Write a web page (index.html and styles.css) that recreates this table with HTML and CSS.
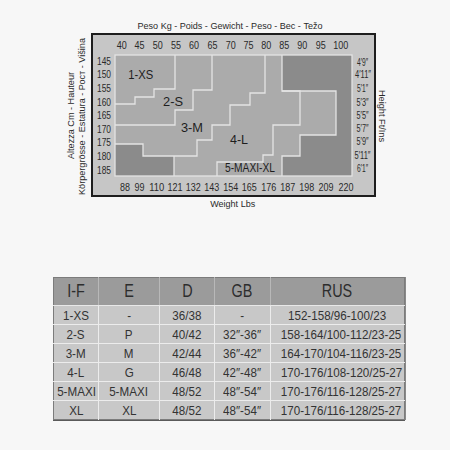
FILE: index.html
```html
<!DOCTYPE html>
<html>
<head>
<meta charset="utf-8">
<link rel="stylesheet" href="styles.css">
</head>
<body>
<div class="chart">
<svg width="450" height="215" viewBox="0 0 450 215" xmlns="http://www.w3.org/2000/svg">
  <text class="cap" x="230" y="28.5" text-anchor="middle" textLength="185" lengthAdjust="spacingAndGlyphs">Peso Kg - Poids - Gewicht - Peso - Вес - Težo</text>
  <rect x="92" y="34" width="283" height="162" fill="#c6c6c6" stroke="#1e1e1e" stroke-width="2"/>
  <rect x="115" y="55" width="237" height="121" fill="#ababab"/>
  <polygon points="282,55 352,55 352,176 282,176 282,156 300,156 300,135 336,135 336,91 282,91" fill="#8b8b8b"/>
  <polygon points="115,144 143,144 143,156 174,156 174,176 115,176" fill="#8b8b8b"/>
  <g fill="none" stroke="#e4e4e4" stroke-width="1.3">
    <rect x="115" y="55" width="237" height="121"/>
    <polyline points="175,55 175,89 154,89 154,97 135,97 135,104 115,104"/>
    <polyline points="212,55 212,90 193,90 193,110 175,110 175,125 115,125"/>
    <polyline points="265,55 265,93 250,93 250,105 230,105 230,125 212,125 212,140 197,140 197,156 143,156 143,144 115,144"/>
    <polyline points="174,156 174,176"/>
    <polyline points="282,55 282,91 300,91 300,125 273,125 273,155 263,155 263,162 217,162 217,176"/>
    <polyline points="282,91 336,91 336,135 300,135 300,156 282,156 282,176"/>
  </g>
  <g class="num" text-anchor="middle">
    <text x="121.7" y="48.5" textLength="10" lengthAdjust="spacingAndGlyphs">40</text>
    <text x="139.6" y="48.5" textLength="10" lengthAdjust="spacingAndGlyphs">45</text>
    <text x="157.7" y="48.5" textLength="10" lengthAdjust="spacingAndGlyphs">50</text>
    <text x="176" y="48.5" textLength="10" lengthAdjust="spacingAndGlyphs">55</text>
    <text x="194" y="48.5" textLength="10" lengthAdjust="spacingAndGlyphs">60</text>
    <text x="212.5" y="48.5" textLength="10" lengthAdjust="spacingAndGlyphs">65</text>
    <text x="230.7" y="48.5" textLength="10" lengthAdjust="spacingAndGlyphs">70</text>
    <text x="248.5" y="48.5" textLength="10" lengthAdjust="spacingAndGlyphs">75</text>
    <text x="266.3" y="48.5" textLength="10" lengthAdjust="spacingAndGlyphs">80</text>
    <text x="284.3" y="48.5" textLength="10" lengthAdjust="spacingAndGlyphs">85</text>
    <text x="302.3" y="48.5" textLength="10" lengthAdjust="spacingAndGlyphs">90</text>
    <text x="320.7" y="48.5" textLength="10" lengthAdjust="spacingAndGlyphs">95</text>
    <text x="340.7" y="48.5" textLength="15" lengthAdjust="spacingAndGlyphs">100</text>

    <text x="104" y="64.7" textLength="14" lengthAdjust="spacingAndGlyphs">145</text>
    <text x="104" y="78.3" textLength="14" lengthAdjust="spacingAndGlyphs">150</text>
    <text x="104" y="91.9" textLength="14" lengthAdjust="spacingAndGlyphs">155</text>
    <text x="104" y="105.5" textLength="14" lengthAdjust="spacingAndGlyphs">160</text>
    <text x="104" y="119.1" textLength="14" lengthAdjust="spacingAndGlyphs">165</text>
    <text x="104" y="132.7" textLength="14" lengthAdjust="spacingAndGlyphs">170</text>
    <text x="104" y="146.3" textLength="14" lengthAdjust="spacingAndGlyphs">175</text>
    <text x="104" y="159.9" textLength="14" lengthAdjust="spacingAndGlyphs">180</text>
    <text x="104" y="173.5" textLength="14" lengthAdjust="spacingAndGlyphs">185</text>

    <text x="362.5" y="66" textLength="11" lengthAdjust="spacingAndGlyphs">4′9″</text>
    <text x="363" y="78.3" textLength="16" lengthAdjust="spacingAndGlyphs">4′11″</text>
    <text x="362.5" y="91.7" textLength="11" lengthAdjust="spacingAndGlyphs">5′1″</text>
    <text x="362.5" y="105.7" textLength="12" lengthAdjust="spacingAndGlyphs">5′3″</text>
    <text x="362.5" y="119" textLength="12" lengthAdjust="spacingAndGlyphs">5′5″</text>
    <text x="362.5" y="132.3" textLength="12" lengthAdjust="spacingAndGlyphs">5′7″</text>
    <text x="362.5" y="144.5" textLength="12" lengthAdjust="spacingAndGlyphs">5′9″</text>
    <text x="362.5" y="159" textLength="16" lengthAdjust="spacingAndGlyphs">5′11″</text>
    <text x="362.5" y="172" textLength="11" lengthAdjust="spacingAndGlyphs">6′1″</text>

    <text x="125" y="190.7" textLength="10" lengthAdjust="spacingAndGlyphs">88</text>
    <text x="139.5" y="190.7" textLength="10" lengthAdjust="spacingAndGlyphs">99</text>
    <text x="156.7" y="190.7" textLength="15" lengthAdjust="spacingAndGlyphs">110</text>
    <text x="175" y="190.7" textLength="15" lengthAdjust="spacingAndGlyphs">121</text>
    <text x="193.3" y="190.7" textLength="15" lengthAdjust="spacingAndGlyphs">132</text>
    <text x="211.7" y="190.7" textLength="15" lengthAdjust="spacingAndGlyphs">143</text>
    <text x="230.7" y="190.7" textLength="15" lengthAdjust="spacingAndGlyphs">154</text>
    <text x="249.3" y="190.7" textLength="15" lengthAdjust="spacingAndGlyphs">165</text>
    <text x="268.7" y="190.7" textLength="15" lengthAdjust="spacingAndGlyphs">176</text>
    <text x="287.7" y="190.7" textLength="15" lengthAdjust="spacingAndGlyphs">187</text>
    <text x="306.7" y="190.7" textLength="15" lengthAdjust="spacingAndGlyphs">198</text>
    <text x="326" y="190.7" textLength="15" lengthAdjust="spacingAndGlyphs">209</text>
    <text x="346" y="190.7" textLength="15" lengthAdjust="spacingAndGlyphs">220</text>
  </g>
  <g class="size" text-anchor="middle">
    <text x="140.7" y="79.3" textLength="25" lengthAdjust="spacingAndGlyphs">1-XS</text>
    <text x="173" y="106" textLength="20" lengthAdjust="spacingAndGlyphs">2-S</text>
    <text x="192" y="131.6" textLength="22" lengthAdjust="spacingAndGlyphs">3-M</text>
    <text x="239" y="144.3" textLength="18" lengthAdjust="spacingAndGlyphs">4-L</text>
    <text x="250" y="172.3" textLength="50" lengthAdjust="spacingAndGlyphs">5-MAXI-XL</text>
  </g>
  <text class="cap" x="232.7" y="206.8" text-anchor="middle" textLength="45" lengthAdjust="spacingAndGlyphs">Weight Lbs</text>
  <text class="cap" transform="translate(74.2,115.5) rotate(-90)" text-anchor="middle" textLength="87" lengthAdjust="spacingAndGlyphs">Altezza Cm - Hauteur</text>
  <text class="cap" transform="translate(85.2,116.5) rotate(-90)" text-anchor="middle" textLength="157" lengthAdjust="spacingAndGlyphs">Körpergrösse - Estatura - Рост - Višina</text>
  <text class="cap" transform="translate(378.5,116) rotate(90)" text-anchor="middle" textLength="52" lengthAdjust="spacingAndGlyphs">Height Ft/Ins</text>
</svg>
</div>
<div class="tablewrap">
<table class="sizes">
  <colgroup><col class="c1"><col class="c2"><col class="c3"><col class="c4"><col class="c5"></colgroup>
  <thead>
    <tr><th><span class="t">I-F</span></th><th><span class="t">E</span></th><th><span class="t">D</span></th><th><span class="t">GB</span></th><th><span class="t">RUS</span></th></tr>
  </thead>
  <tbody>
    <tr><td><span class="t">1-XS</span></td><td><span class="t">-</span></td><td><span class="t">36/38</span></td><td><span class="t">-</span></td><td><span class="t">152-158/96-100/23</span></td></tr>
    <tr><td><span class="t">2-S</span></td><td><span class="t">P</span></td><td><span class="t">40/42</span></td><td><span class="t">32″-36″</span></td><td><span class="t">158-164/100-112/23-25</span></td></tr>
    <tr><td><span class="t">3-M</span></td><td><span class="t">M</span></td><td><span class="t">42/44</span></td><td><span class="t">36″-42″</span></td><td><span class="t">164-170/104-116/23-25</span></td></tr>
    <tr><td><span class="t">4-L</span></td><td><span class="t">G</span></td><td><span class="t">46/48</span></td><td><span class="t">42″-48″</span></td><td><span class="t">170-176/108-120/25-27</span></td></tr>
    <tr><td><span class="t">5-MAXI</span></td><td><span class="t">5-MAXI</span></td><td><span class="t">48/52</span></td><td><span class="t">48″-54″</span></td><td><span class="t">170-176/116-128/25-27</span></td></tr>
    <tr><td><span class="t">XL</span></td><td><span class="t">XL</span></td><td><span class="t">48/52</span></td><td><span class="t">48″-54″</span></td><td><span class="t">170-176/116-128/25-27</span></td></tr>
  </tbody>
</table>
</div>
</body>
</html>
```
FILE: styles.css
```css
html, body {
  margin: 0;
  padding: 0;
}
body {
  width: 450px;
  height: 450px;
  overflow: hidden;
  background: #f7f7f7;
  font-family: "Liberation Sans", Arial, sans-serif;
  color: #2f2f2f;
}
.chart svg {
  display: block;
}
.cap {
  font-family: "Liberation Sans", Arial, sans-serif;
  font-size: 9.5px;
  fill: #2a2a2a;
}
.num text {
  font-family: "Liberation Sans", Arial, sans-serif;
  font-size: 11.5px;
  fill: #2a2a2a;
}
.size text {
  font-family: "Liberation Sans", Arial, sans-serif;
  font-size: 12px;
  fill: #1e1e1e;
}
.tablewrap {
  padding: 62px 0 0 53px;
}
.sizes {
  border-collapse: collapse;
  table-layout: fixed;
  width: 351px;
  border: 1px solid #7c7c7c;
  box-shadow: 0 1px 0 #5a5a5a, 1px 0 0 #8a8a8a;
}
.c1 { width: 45px; }
.c2 { width: 61px; }
.c3 { width: 55px; }
.c4 { width: 56px; }
.c5 { width: 134px; }
.sizes th {
  height: 27px;
  padding: 0;
  background: #9b9b9b;
  font-weight: normal;
  font-size: 18px;
  color: #2d2d2d;
  text-align: center;
  border-left: 1px solid #b8b8b8;
  border-bottom: 1px solid #e8e8e8;
}
.sizes td {
  height: 18px;
  padding: 0;
  background: #c8c8c8;
  font-size: 13.5px;
  color: #333;
  text-align: center;
  border: 1px solid #ececec;
  border-top: none;
}
.sizes tr:last-child td {
  border-bottom: none;
}
.sizes th:first-child, .sizes td:first-child {
  border-left: none;
}
.sizes td:last-child {
  border-right: none;
}
.t {
  display: inline-block;
  transform: scaleX(0.86);
  white-space: nowrap;
}
.sizes th .t {
  transform: scaleX(0.8);
}
```
